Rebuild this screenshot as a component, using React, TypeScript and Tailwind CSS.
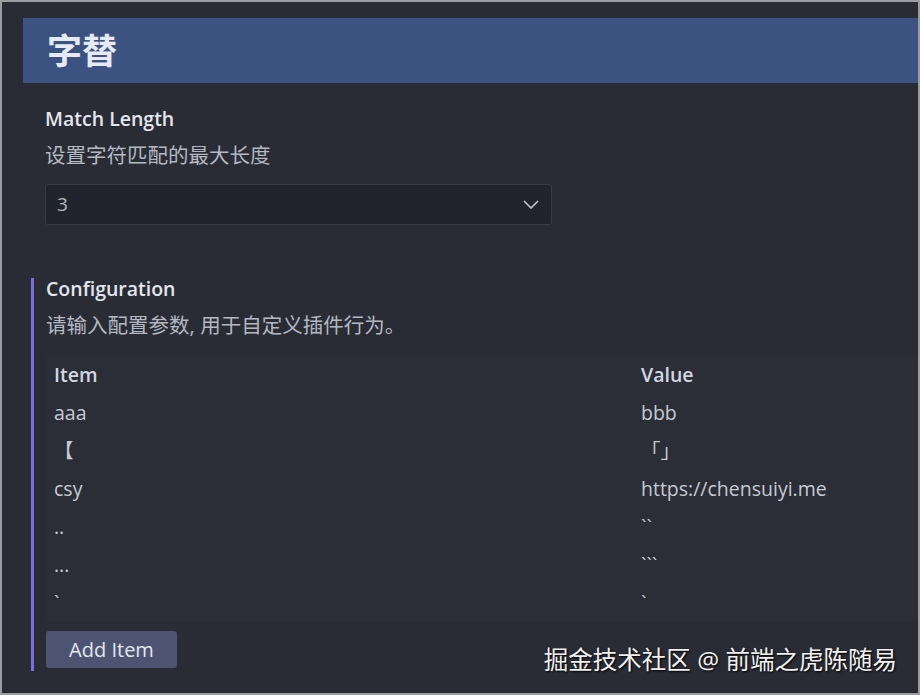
const rows: [string, string][] = [
  ['aaa', 'bbb'],
  ['【', '「」'],
  ['csy', 'https://chensuiyi.me'],
  ['..', '``'],
  ['...', '```'],
  ['`', '`'],
];

export default function App() {
  return (
    <div
      className="w-[920px] h-[695px] bg-[#9b9ca0] p-[2px] overflow-hidden"
      style={{ fontFamily: '"Open Sans", "Noto Sans CJK SC", sans-serif' }}
    >
      <div className="relative w-full h-full bg-[#292c35] pt-[16px]">
        <div className="ml-[21px] h-[65px] bg-[#3c5381] flex items-center pl-[24px]">
          <h1 className="text-[35px] font-bold text-[#e6eaf2] leading-none">字替</h1>
        </div>

        <div className="pl-[43px] pt-[22px]">
          <div className="text-[19.5px] font-semibold text-[#e3e6ee] leading-[28px]">Match Length</div>
          <div className="mt-[8px] text-[20.5px] text-[#b4b8c2] leading-[28px]">设置字符匹配的最大长度</div>
          <div className="mt-[15px] w-[507px] h-[41px] bg-[#21242c] border border-[#383b45] rounded-[3px] flex items-center justify-between pl-[11px] pr-[12px]">
            <span className="text-[19px] text-[#b4b8c2]">3</span>
            <svg width="16" height="9" viewBox="0 0 16 9" fill="none" stroke="#c8ccd6" strokeWidth="1.5">
              <polyline points="1,1 8,8 15,1" />
            </svg>
          </div>
        </div>

        <div className="mt-[53px] ml-[29px] border-l-[3px] border-[#7c6ddc] pl-[12px] h-[393px]">
          <div className="text-[19.5px] font-semibold text-[#e3e6ee] leading-[22px]">Configuration</div>
          <div className="mt-[11px] text-[20.5px] text-[#b4b8c2] leading-[28px]">请输入配置参数, 用于自定义插件行为。</div>
          <div className="mt-[17px] bg-[#2b2e37]">
            <div className="grid grid-cols-[587px_1fr] h-[38px] items-center px-[8px] text-[19.5px] font-semibold text-[#d2d6e0]">
              <span>Item</span>
              <span>Value</span>
            </div>
            {rows.map(([k, v], i) => (
              <div key={i} className="grid grid-cols-[587px_1fr] h-[38px] items-center px-[8px] text-[19.5px] text-[#c6cad4]">
                <span>{k}</span>
                <span>{v}</span>
              </div>
            ))}
          </div>
          <button className="mt-[9px] w-[131px] h-[37px] bg-[#4d5471] rounded-[3px] text-[20px] text-[#e3e6ee]">
            Add Item
          </button>
        </div>

        <div className="absolute right-[21px] bottom-[16px] text-[24.5px] leading-[34px] text-[#f0f0f0] [text-shadow:1px_1px_2px_#000]">
          掘金技术社区 @ 前端之虎陈随易
        </div>
      </div>
    </div>
  );
}
